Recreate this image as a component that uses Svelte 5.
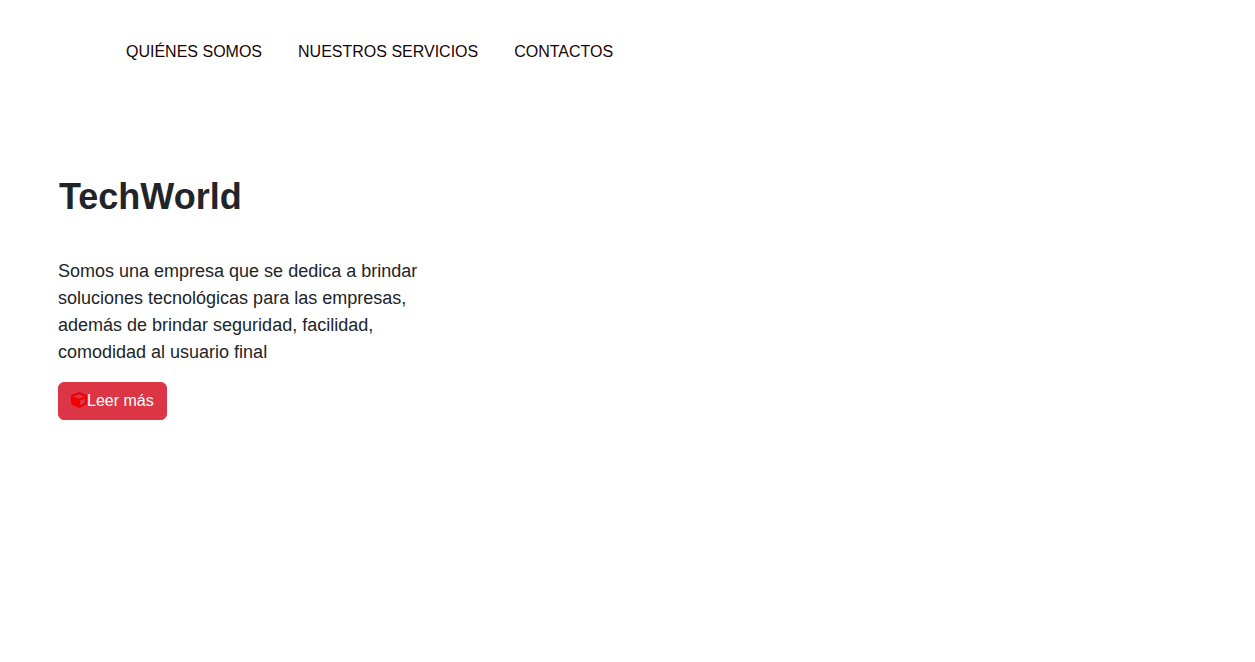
<script>
  const links = ['QUIÉNES SOMOS', 'NUESTROS SERVICIOS', 'CONTACTOS'];
</script>

<header>
  <nav aria-label="Principal">
    {#each links as link}
      <a href="#top">{link}</a>
    {/each}
  </nav>
</header>

<main>
  <h1>TechWorld</h1>
  <p>
    Somos una empresa que se dedica a brindar soluciones tecnológicas para las
    empresas, además de brindar seguridad, facilidad, comodidad al usuario final
  </p>
  <button type="button">
    <svg viewBox="0 0 512 512" width="16" height="16" fill="currentColor" aria-hidden="true">
      <path
        d="M239.1 6.3l-208 78c-18.7 7-31.1 25-31.1 45v225.1c0 18.2 10.3 34.8 26.5 42.9l208 104c13.5 6.8 29.4 6.8 42.9 0l208-104c16.3-8.1 26.5-24.8 26.5-42.9V129.3c0-20-12.4-37.9-31.1-44.9l-208-78C262 2.2 250 2.2 239.1 6.3zM256 68.4l192 72v1.1l-192 78-192-78v-1.1l192-72zm32 356V275.5l160-65v133.9l-160 80z"
      />
    </svg><span>Leer más</span>
  </button>
</main>

<style>
  :global(body) {
    margin: 0;
    background: #fff;
    color: #212529;
    font-family: 'Liberation Sans', Arial, sans-serif;
    font-size: 16px;
    line-height: 24px;
  }

  header {
    padding: 40px 108px;
  }

  nav {
    display: flex;
    flex-wrap: wrap;
  }

  nav a {
    padding: 0 18px;
    color: #1a0506;
    text-decoration: none;
  }

  main {
    padding: 71px 58px;
  }

  h1 {
    margin: 0 0 40px 1px;
    font-size: 36px;
    line-height: 43px;
  }

  p {
    max-width: 374px;
    margin: 0 0 16px;
    font-size: 18px;
    line-height: 27px;
  }

  button {
    display: block;
    padding: 6px 12px;
    border: 1px solid #dc3545;
    border-radius: 6px;
    background: #dc3545;
    color: #fff;
    font: inherit;
    cursor: pointer;
  }

  svg {
    color: #f00000;
    vertical-align: -2px;
  }
</style>
